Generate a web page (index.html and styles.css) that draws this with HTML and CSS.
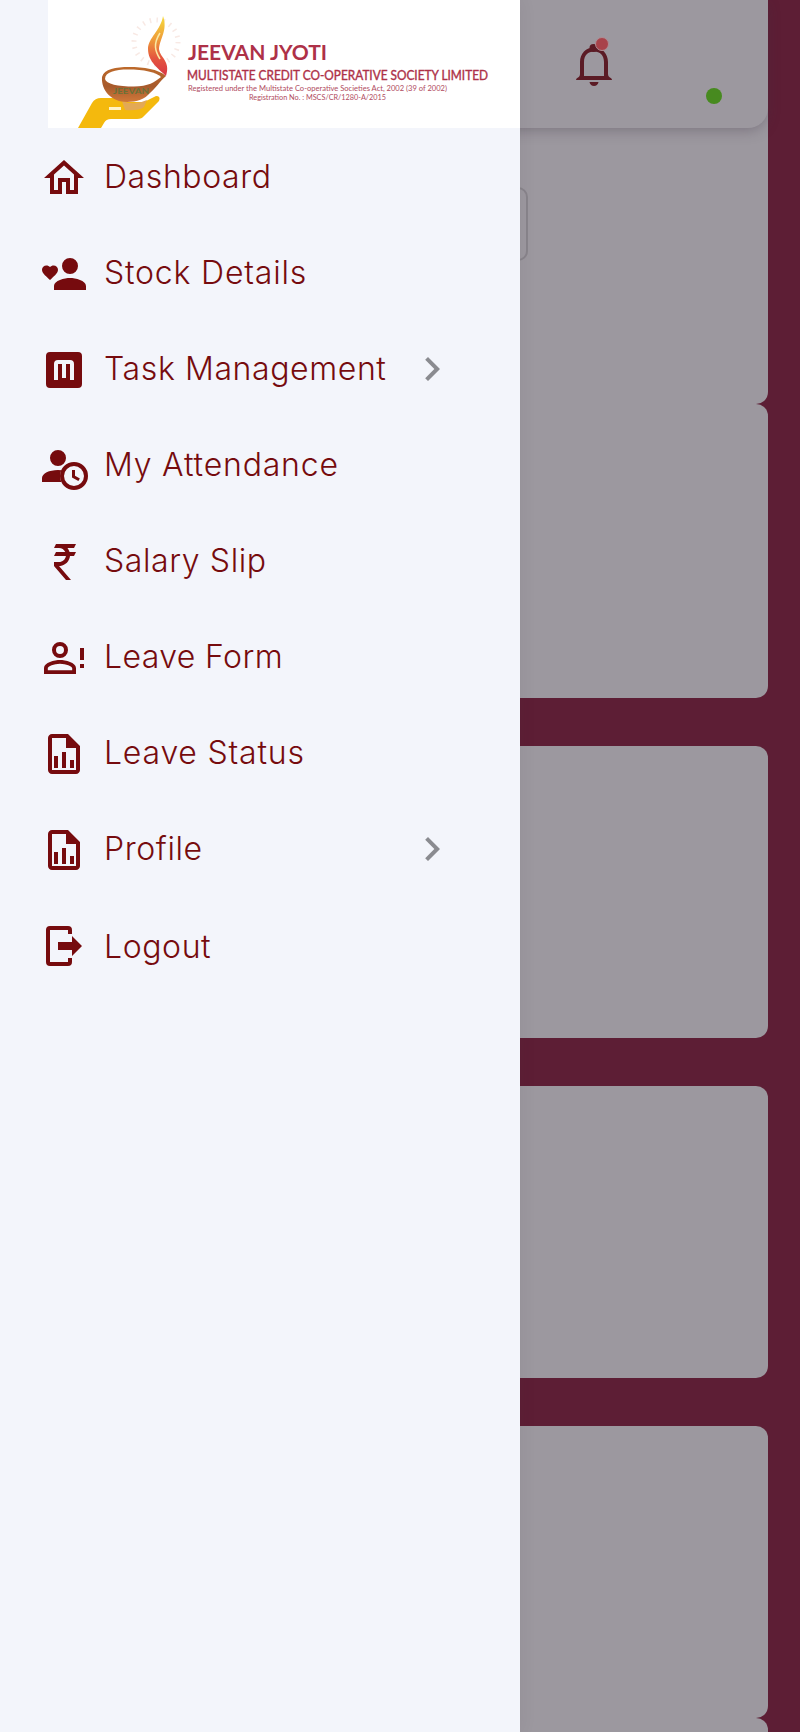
FILE: index.html
```html
<!DOCTYPE html>
<html lang="en">
<head>
<meta charset="utf-8">
<title>Jeevan Jyoti</title>
<link rel="stylesheet" href="styles.css">
</head>
<body>
<div class="page">
  <section class="panel panel-top">
    <header class="topbar">
      <div class="bell">
        <svg width="36" height="44" viewBox="0 0 36 44">
          <circle cx="17.500" cy="5" r="4"/>
          <path d="M0 37c0-2.400 4-2.300 4-6V19C4 10.500 10 4.500 18 4.500S32 10.500 32 19v12c0 3.700 4 3.600 4 6ZM8 33H28V19C28 12.500 24 8.500 18 8.500S8 12.500 8 19Z" fill-rule="evenodd"/>
          <path d="M13.500 39h9c-.5 2.600-2.200 4-4.500 4s-4-1.400-4.500-4Z"/>
        </svg>
        <span class="bell-dot"></span>
      </div>
      <span class="online"></span>
    </header>
    <div class="field"></div>
  </section>
  <section class="panel panel-first"></section>
  <section class="panel"></section>
  <section class="panel"></section>
  <section class="panel"></section>
  <section class="panel panel-last"></section>
</div>

<aside class="drawer">
  <div class="brand">
    <svg width="472" height="128" viewBox="48 0 472 128">
      <defs>
        <linearGradient id="flame" x1="0" y1="0" x2="0" y2="1">
          <stop offset="0" stop-color="#f6dc3c"/><stop offset=".4" stop-color="#ee9a3a"/><stop offset=".7" stop-color="#e4553f"/><stop offset="1" stop-color="#d93644"/>
        </linearGradient>
        <linearGradient id="bowl" x1="0" y1="0" x2="0" y2="1">
          <stop offset="0" stop-color="#bd6a2b"/><stop offset=".55" stop-color="#a75a2c"/><stop offset="1" stop-color="#d0793a"/>
        </linearGradient>
      </defs>
      <circle class="rays" cx="156" cy="42" r="22"/>
      <path fill="#f4b90d" d="M78 128 92 103q3-5 9-5h20q4 2 7 4h16l12-6q5 0 3 5l-15 15q-2 3-7 3h-26q-5 0-7 4l-3 5Z"/>
      <path fill="#fff3c4" d="M109 107h12v3h-12z"/>
      <path fill="#e3a955" d="M122 101q13 5 25-1l-3 7q-5 4-19 3Z"/>
      <path fill="url(#bowl)" d="M102 77C104 69 116 67 129 67c15 0 29 2 37 9-7 6-10 12-16 17-5 6-13 9-23 9-15 0-26-11-25-25Z"/>
      <path fill="#fff" d="M105 79c0-7 10-9.500 23-9.500 16 0 28 2.500 33 7.500-6 5-13 9.500-27 9.500-16 0-28-2.500-29-7.500Z"/>
      <text class="bowl-text" x="113" y="94" textLength="36" lengthAdjust="spacingAndGlyphs">JEEVAN</text>
      <path fill="url(#flame)" d="M163 16c5 14-3 22-4 33 1 9 12 12 7 27-7-7-18-14-18-27 0-11 13-19 15-33Z"/>
      <path d="M160 33c-7 11-5 18 0 26" fill="none" stroke="#fbe9a5" stroke-width="1.500"/>
      <g class="brand-text">
        <text class="brand-name" x="188" y="60" textLength="139" lengthAdjust="spacingAndGlyphs">JEEVAN JYOTI</text>
        <text class="brand-sub" x="187" y="79.500" textLength="301" lengthAdjust="spacingAndGlyphs">MULTISTATE CREDIT CO-OPERATIVE SOCIETY LIMITED</text>
        <text class="brand-note" x="188" y="91" textLength="259" lengthAdjust="spacingAndGlyphs">Registered under the Multistate Co-operative Societies Act, 2002 (39 of 2002)</text>
        <text class="brand-note" x="249" y="100" textLength="137" lengthAdjust="spacingAndGlyphs">Registration No. : MSCS/CR/1280-A/2015</text>
      </g>
    </svg>
  </div>
  <nav class="menu">
    <a class="item"><svg class="icon" viewBox="0 0 24 24"><path d="M12 5.690 17 10.190V18H15V12H9V18H7V10.190L12 5.690M12 3 2 12H5V20H11V14H13V20H19V12H22L12 3Z"/></svg><span>Dashboard</span></a>
    <a class="item item-wide"><svg class="icon" viewBox="0 0 24 24"><path d="M15 14C12.330 14 7 15.330 7 18V20H23V18C23 15.330 17.670 14 15 14M15 12A4 4 0 0 0 19 8 4 4 0 0 0 15 4 4 4 0 0 0 11 8 4 4 0 0 0 15 12M5 15 4.400 14.500C2.400 12.600 1 11.400 1 9.900 1 8.600 2 7.700 3.200 7.700 3.900 7.700 4.600 8 5 8.500 5.400 8 6.100 7.700 6.800 7.700 8 7.700 9 8.600 9 9.900 9 11.400 7.600 12.600 5.600 14.500Z"/></svg><span>Stock Details</span></a>
    <a class="item"><svg class="icon" viewBox="0 0 24 24"><path fill-rule="evenodd" d="M5 3H19A2 2 0 0 1 21 5V19A2 2 0 0 1 19 21H5A2 2 0 0 1 3 19V5A2 2 0 0 1 5 3M9 7A2 2 0 0 0 7 9V17H9V9H11V16H13V9H15V17H17V9A2 2 0 0 0 15 7H9Z"/></svg><span>Task Management</span><svg class="chevron" viewBox="0 0 24 24"><path d="M8.590 16.580 13.170 12 8.590 7.410 10 6 16 12 10 18Z"/></svg></a>
    <a class="item item-wide"><svg class="icon" viewBox="0 0 24 24"><path d="M9 4A4 4 0 0 1 9 12 4 4 0 0 1 9 4M10.630 14.100A7 7 0 0 0 10 17C10 18.060 10.230 19.070 10.640 20H1V18C1 15.790 4.580 14 9 14Z"/><circle class="clock" cx="17" cy="17" r="6"/><path d="M16 14V17.690L19.190 19.530 19.940 18.230 17.500 16.820V14Z"/></svg><span>My Attendance</span></a>
    <a class="item"><svg class="icon" viewBox="0 0 24 24"><path d="M8 3H18L17 5H13.740C14.220 5.580 14.580 6.260 14.790 7H18L17 9H15C14.750 11.570 12.740 13.630 10.200 13.960V14H9.500L15.500 21H13L7 14V12H9.500C11.260 12 12.720 10.700 12.960 9H7L8 7H12.660C12.100 5.820 10.900 5 9.500 5H7Z"/></svg><span>Salary Slip</span></a>
    <a class="item item-narrow"><svg class="icon" viewBox="0 0 24 24"><path fill-rule="evenodd" d="M20 7H22V13H20ZM20 15H22V17H20ZM10 4A4 4 0 0 1 10 12 4 4 0 0 1 10 4M10 6A2 2 0 0 0 10 10 2 2 0 0 0 10 6M10 13C12.670 13 18 14.330 18 17V20H2V17C2 14.330 7.330 13 10 13M10 14.900C7.030 14.900 3.900 16.360 3.900 17V18.100H16.100V17C16.100 16.360 12.970 14.900 10 14.900Z"/></svg><span>Leave Form</span></a>
    <a class="item item-wide"><svg class="icon" viewBox="0 0 24 24"><path fill-rule="evenodd" d="M14 2H6C4.900 2 4 2.900 4 4V20C4 21.100 4.900 22 6 22H18C19.100 22 20 21.100 20 20V8L14 2M18 20H6V4H13V9H18V20M9 13V19H7V13H9M15 15V19H17V15H15M11 11V19H13V11H11Z"/></svg><span>Leave Status</span></a>
    <a class="item"><svg class="icon" viewBox="0 0 24 24"><path fill-rule="evenodd" d="M14 2H6C4.900 2 4 2.900 4 4V20C4 21.100 4.900 22 6 22H18C19.100 22 20 21.100 20 20V8L14 2M18 20H6V4H13V9H18V20M9 13V19H7V13H9M15 15V19H17V15H15M11 11V19H13V11H11Z"/></svg><span>Profile</span><svg class="chevron" viewBox="0 0 24 24"><path d="M8.590 16.580 13.170 12 8.590 7.410 10 6 16 12 10 18Z"/></svg></a>
    <a class="item item-logout"><svg class="icon" viewBox="0 0 24 24"><path d="M16 17V14H9V10H16V7L21 12 16 17M14 2A2 2 0 0 1 16 4V6H14V4H5V20H14V18H16V20A2 2 0 0 1 14 22H5A2 2 0 0 1 3 20V4A2 2 0 0 1 5 2H14Z"/></svg><span>Logout</span></a>
  </nav>
</aside>
</body>
</html>
```
FILE: styles.css
```css
* { box-sizing: border-box; }

body {
  margin: 0;
  background: #5d1e35;
  font-family: Inter, "Liberation Sans", sans-serif;
}

.page {
  display: flex;
  flex-direction: column;
  gap: 48px;
  height: 1732px;
  padding: 0 32px;
  overflow: hidden;
}

.panel {
  flex: none;
  height: 292px;
  border-radius: 12px;
  background: #9c989f;
}

.panel-top {
  height: 404px;
  border-top-left-radius: 0;
  border-top-right-radius: 0;
}

.panel-first {
  height: 294px;
  margin-top: -48px;
}

.panel-last { margin-top: -48px; }

.topbar {
  display: flex;
  justify-content: flex-end;
  height: 128px;
  padding-right: 46px;
  border-radius: 0 0 20px 20px;
  background: #9c989f;
  box-shadow: 0 4px 14px -2px rgba(60, 50, 65, 0.35);
}

.bell {
  position: relative;
  width: 36px;
  height: 44px;
  margin: 43px 94.5px 0 0;
}

.bell svg {
  display: block;
  fill: #5b1b25;
}

.bell-dot {
  position: absolute;
  top: -6px;
  left: 19.5px;
  width: 14px;
  height: 14px;
  border: 1px solid #b08d94;
  border-radius: 50%;
  background: #a8424a;
}

.online {
  width: 16px;
  height: 16px;
  margin-top: 88px;
  border-radius: 50%;
  background: #478a1f;
}

.field {
  width: 464px;
  height: 74px;
  margin: 59px 0 0 32px;
  border: 2px solid #88848b;
  border-radius: 10px;
}

.drawer {
  position: absolute;
  top: 0;
  left: 0;
  width: 520px;
  height: 1732px;
  background: #f3f5fb;
  box-shadow: 0 0 16px rgba(50, 40, 55, 0.08);
}

.brand {
  height: 128px;
  margin-left: 48px;
  background: #fff;
}

.brand svg { display: block; }

.rays {
  fill: none;
  stroke: #f8e9e4;
  stroke-width: 5;
  stroke-dasharray: 1.5 5.4;
}

.brand-text {
  font-family: Lato, sans-serif;
  fill: #ae3148;
}

.brand-name {
  font-size: 21.5px;
  font-weight: 700;
}

.brand-sub {
  font-size: 13.5px;
  font-weight: 400;
  stroke: #ae3148;
  stroke-width: 0.4px;
}

.brand-note {
  font-size: 7.5px;
  fill: #b04a5e;
}

.bowl-text {
  font: 700 8px Lato, sans-serif;
  fill: #687238;
}

.menu {
  display: flex;
  flex-direction: column;
  padding: 2px 64px 0 40px;
}

.item {
  display: flex;
  align-items: center;
  height: 96px;
  color: #760b0e;
  font-size: 32px;
  font-weight: 300;
  font-optical-sizing: none;
  line-height: 40px;
  letter-spacing: 0.6px;
  white-space: nowrap;
}

.item-wide { letter-spacing: 0.8px; }

.item-narrow { letter-spacing: 0.4px; }

.item span {
  margin: -2px 0 0 16px;
}

.item-logout span { margin-top: 2px; }

.icon,
.chevron {
  flex: none;
  width: 48px;
  height: 48px;
  fill: #760b0e;
}

.clock {
  fill: none;
  stroke: #760b0e;
  stroke-width: 2;
}

.chevron {
  margin: -2px 0 0 auto;
  fill: #8a8b90;
}
```
